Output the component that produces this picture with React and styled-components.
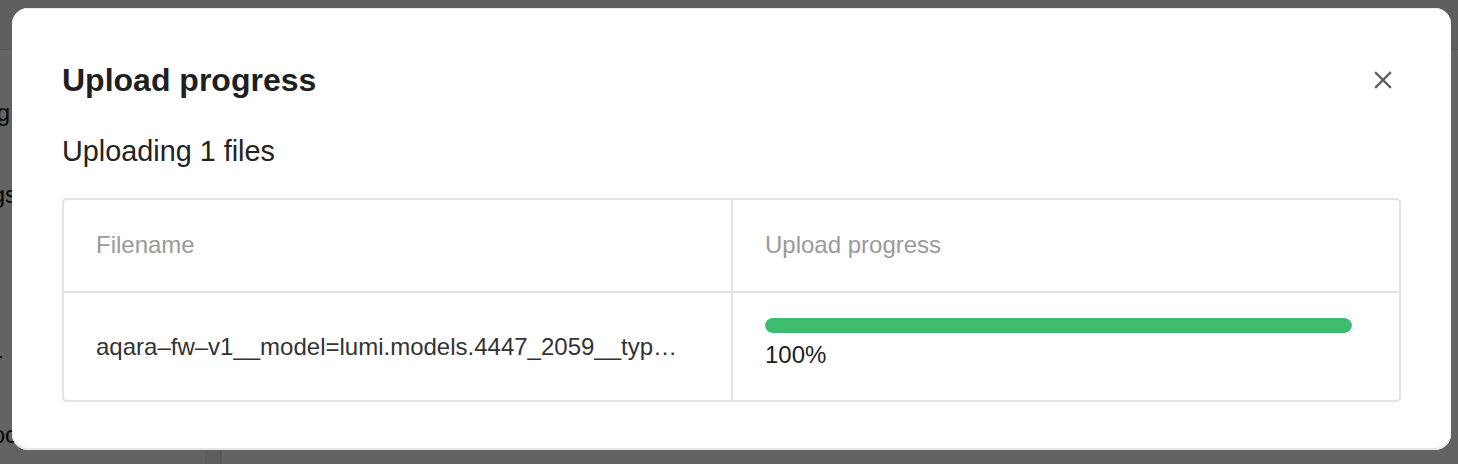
import React from "react";
import styled, { createGlobalStyle } from "styled-components";

const GlobalStyle = createGlobalStyle`
  html, body {
    margin: 0;
    padding: 0;
    background: #ffffff;
    font-family: "Liberation Sans", Arial, sans-serif;
  }
  * {
    box-sizing: border-box;
  }
`;

const files = [
  {
    name: "aqara–fw–v1__model=lumi.models.4447_2059__type=zigbee_ota.bin",
    percent: 100,
  },
];

const App = () => {
  return (
    <>
      <GlobalStyle />
      <BackPage>
        <TopBar />
        <PageBody>
          <SideNav>
            <NavItem gap={49} clip={10}>Setting</NavItem>
            <NavItem gap={54} clip={17}>Settings</NavItem>
            <NavItem gap={132} clip={3}>-</NavItem>
            <NavItem gap={52} clip={17}>Doc</NavItem>
          </SideNav>
          <SideRule />
        </PageBody>
      </BackPage>

      <Overlay>
        <Modal>
          <ModalHeader>
            <Title>Upload progress</Title>
            <CloseButton type="button" aria-label="Close">
              <svg width="18" height="18" viewBox="0 0 18 18">
                <path
                  d="M2 2 L16 16 M16 2 L2 16"
                  stroke="#5f5f5f"
                  strokeWidth="2.4"
                  strokeLinecap="square"
                />
              </svg>
            </CloseButton>
          </ModalHeader>

          <Subtitle>Uploading {files.length} files</Subtitle>

          <Table>
            <HeadCell>Filename</HeadCell>
            <HeadCell last>Upload progress</HeadCell>
            {files.map((file) => (
              <React.Fragment key={file.name}>
                <NameCell>
                  <FileName>{file.name}</FileName>
                </NameCell>
                <ProgressCell>
                  <Track>
                    <Bar style={{ width: `${file.percent}%` }} />
                  </Track>
                  <Percent>{file.percent}%</Percent>
                </ProgressCell>
              </React.Fragment>
            ))}
          </Table>
        </Modal>
      </Overlay>
    </>
  );
};

const BackPage = styled.div`
  height: 100vh;
  display: flex;
  flex-direction: column;
`;

const TopBar = styled.div`
  height: 50px;
  background: #f4f4f4;
  border-bottom: 1px solid #e2e2e2;
`;

const PageBody = styled.div`
  flex: 1;
  display: flex;
`;

const SideNav = styled.div`
  width: 205px;
  display: flex;
  flex-direction: column;
`;

const NavItem = styled.div`
  width: ${(p) => p.clip}px;
  margin-top: ${(p) => p.gap}px;
  display: flex;
  justify-content: flex-end;
  overflow: hidden;
  white-space: nowrap;
  font-size: 24px;
  line-height: 28px;
  color: #111;
`;

const SideRule = styled.div`
  width: 17px;
  background: #f3f3f3;
  border-right: 2px solid #e4e4e4;
`;

const Overlay = styled.div`
  position: fixed;
  inset: 0;
  background: rgba(0, 0, 0, 0.61);
  display: flex;
  align-items: flex-start;
  padding: 8px 7px 0 12px;
`;

const Modal = styled.div`
  flex: 1;
  background: #ffffff;
  border-radius: 16px;
  padding: 52px 50px 48px 50px;
  box-shadow: inset 0 1px 0 #ececec, inset 0 -2px 0 #e6e6e6;
`;

const ModalHeader = styled.div`
  display: flex;
  align-items: center;
  justify-content: space-between;
`;

const Title = styled.h2`
  margin: 0;
  font-size: 32px;
  line-height: 40px;
  font-weight: 700;
  color: #1f1f1f;
`;

const CloseButton = styled.button`
  width: 18px;
  height: 18px;
  padding: 0;
  margin-right: 9px;
  border: 0;
  background: none;
  display: flex;
  cursor: pointer;
`;

const Subtitle = styled.div`
  margin-top: 33px;
  font-size: 28.8px;
  line-height: 36px;
  color: #222;
`;

const Table = styled.div`
  margin-top: 29px;
  display: grid;
  grid-template-columns: 669px 1fr;
  grid-template-rows: 93px 107px;
  border: 2px solid #e3e3e3;
  border-radius: 5px;
`;

const HeadCell = styled.div`
  display: flex;
  align-items: center;
  padding: 0 32px 2px;
  font-size: 24px;
  color: #9a9a9a;
  border-bottom: 2px solid #e3e3e3;
  border-right: ${(p) => (p.last ? "0" : "2px solid #e3e3e3")};
`;

const NameCell = styled.div`
  display: flex;
  align-items: center;
  padding: 0 43px 0 32px;
  min-width: 0;
  border-right: 2px solid #e3e3e3;
`;

const FileName = styled.span`
  font-size: 24px;
  color: #333;
  white-space: nowrap;
  overflow: hidden;
  text-overflow: ellipsis;
`;

const ProgressCell = styled.div`
  display: flex;
  flex-direction: column;
  padding: 25px 47px 0 32px;
`;

const Track = styled.div`
  height: 15px;
  border-radius: 8px;
  background: #ececec;
  overflow: hidden;
`;

const Bar = styled.div`
  height: 100%;
  border-radius: 8px;
  background: #3bbd6d;
`;

const Percent = styled.div`
  margin-top: 8px;
  font-size: 24px;
  line-height: 28px;
  color: #222;
`;

export default App;
